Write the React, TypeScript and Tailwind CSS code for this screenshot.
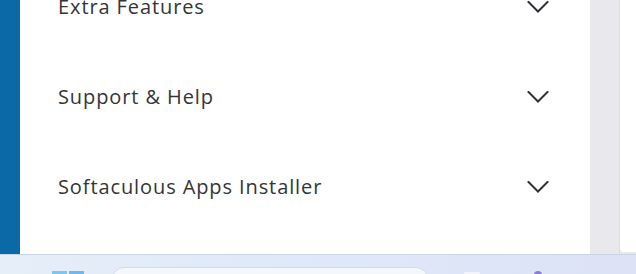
const SECTIONS = ["Extra Features", "Support & Help", "Softaculous Apps Installer"];

function Chevron() {
  return (
    <svg width="22" height="12" viewBox="0 0 22 12" fill="none" className="shrink-0">
      <path d="M1.5 1L11 10.5L20.5 1" stroke="#2f3136" strokeWidth="2" strokeLinecap="square" />
    </svg>
  );
}

export default function App() {
  return (
    <div className="relative h-[274px] w-[636px] overflow-hidden bg-white font-['Open_Sans',sans-serif]">
      <div className="flex h-[254px]">
        {/* Sidebar strip */}
        <div className="w-[20px] shrink-0 bg-[#0a69a6]" />

        {/* Accordion panel */}
        <div className="w-[570px] shrink-0 overflow-hidden bg-white">
          <div className="mt-[-38px] flex flex-col">
            {SECTIONS.map((label) => (
              <div key={label} className="flex h-[90px] items-center justify-between pl-[38px] pr-[41px]">
                <span className="text-[20px] tracking-[0.9px] text-[#333539]">{label}</span>
                <Chevron />
              </div>
            ))}
          </div>
        </div>

        {/* Scrollbar / gutter */}
        <div className="w-[30px] shrink-0 bg-[#e9e8ed] border-r border-[#dedde3]" />
        <div className="flex-1 bg-[#e9e8ed]">
          <div className="h-[252px] rounded-bl-[4px] bg-white" />
        </div>
      </div>

      {/* Taskbar */}
      <div className="relative h-[20px] border-t border-[#c9d4e4] bg-gradient-to-r from-[#e6eef8] via-[#dfe8f8] to-[#dde2f7]">
        <div className="absolute left-[52px] top-[16px] flex gap-[2px]">
          <div className="h-[8px] w-[15px] bg-[#7cc6f1]" />
          <div className="h-[8px] w-[15px] bg-[#6db8ee]" />
        </div>
        <div className="absolute left-[112px] top-[12px] h-[24px] w-[316px] rounded-full border border-[#d3dceb] bg-[#f4f7fc]" />
        <div className="absolute left-[464px] top-[17px] h-[8px] w-[16px] rounded-t-[2px] bg-[#f3f5fb]" />
        <div className="absolute left-[534px] top-[16px] h-[8px] w-[8px] rounded-t-full bg-[#8b7bd8]" />
      </div>
    </div>
  );
}
